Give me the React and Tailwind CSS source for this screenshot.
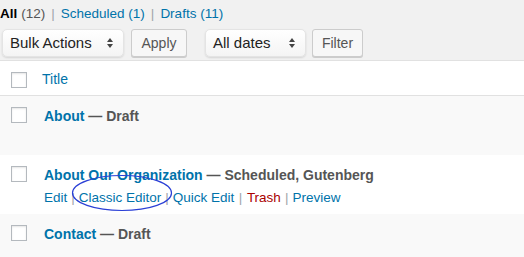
import React from 'react';

const font = { fontFamily: '"Liberation Sans", Arial, sans-serif' };

const Sep = ({ gap = 'mx-[6px]' }) => <span className={`${gap} text-[#a0a5aa]`}>|</span>;

const Arrows = () => (
  <svg width="8" height="12" viewBox="0 0 8 12" className="shrink-0">
    <path d="M4 1 L7 5 L1 5 Z" fill="#444" />
    <path d="M4 11 L7 7 L1 7 Z" fill="#444" />
  </svg>
);

const Select = ({ label, width }) => (
  <div
    className={`flex h-[28px] items-center justify-between rounded-[5px] border border-[#e4e4e4] bg-gradient-to-b from-white to-[#f4f4f4] pl-[7px] pr-[9px] text-[15px] text-[#222] shadow-[0_1px_2px_rgba(0,0,0,0.12)] ${width}`}
  >
    <span>{label}</span>
    <Arrows />
  </div>
);

const Button = ({ label, width }) => (
  <div
    className={`flex h-[28px] items-center justify-center rounded-[3px] border border-[#cccccc] bg-[#f7f7f7] text-[14px] text-[#555] shadow-[0_1px_0_#cccccc] ${width}`}
  >
    {label}
  </div>
);

const Checkbox = () => (
  <div className="h-[16px] w-[16px] shrink-0 border border-[#b4b9be] bg-white shadow-[inset_0_1px_2px_rgba(0,0,0,0.1)]" />
);

const Row = ({ title, state, bg, actions }) => (
  <div className={`relative flex h-[59px] ${bg}`}>
    <div className="pl-[11px] pt-[11px]">
      <Checkbox />
    </div>
    <div className="pl-[17px] pt-[11px]">
      <div className="text-[14px] font-bold leading-[18px]">
        <span className="text-[#0073aa]">{title}</span>
        <span className="text-[#555]"> — {state}</span>
      </div>
      {actions && (
        <div className="relative mt-[5px] flex text-[13.5px] leading-[18px]">
          <span className="text-[#0073aa]">Edit</span>
          <Sep gap="mx-[4px]" />
          <span className="text-[#0073aa]">Classic Editor</span>
          <Sep gap="mx-[4px]" />
          <span className="text-[#0073aa]">Quick Edit</span>
          <Sep gap="mx-[4.5px]" />
          <span className="text-[#a00]">Trash</span>
          <Sep gap="mx-[4px]" />
          <span className="text-[#0073aa]">Preview</span>
          <svg
            className="absolute left-[27px] top-[-15px]"
            width="102"
            height="38"
            viewBox="0 0 102 38"
          >
            <ellipse cx="51" cy="19" rx="49.5" ry="17.5" fill="none" stroke="#2a3fd6" strokeWidth="1.2" />
          </svg>
        </div>
      )}
    </div>
  </div>
);

export default function App() {
  return (
    <div className="h-[257px] w-[524px] overflow-hidden bg-[#f1f1f1]" style={font}>
      <div className="flex h-[28px] items-center pt-[1px] text-[13.5px]">
        <span className="font-bold text-black">All</span>
        <span className="ml-[4px] text-[#555]">(12)</span>
        <Sep />
        <span className="text-[#0073aa]">Scheduled (1)</span>
        <Sep />
        <span className="text-[#0073aa]">Drafts (11)</span>
      </div>
      <div className="mt-[1px] flex items-center pl-[2px]">
        <Select label="Bulk Actions" width="w-[122px]" />
        <div className="ml-[7px]">
          <Button label="Apply" width="w-[56px]" />
        </div>
        <div className="ml-[18px]">
          <Select label="All dates" width="w-[101px]" />
        </div>
        <div className="ml-[6px]">
          <Button label="Filter" width="w-[51px]" />
        </div>
      </div>
      <div className="mt-[3px] border-t border-[#e1e1e1]">
        <div className="flex h-[35px] border-b border-[#e1e1e1] bg-white">
          <div className="pl-[11px] pt-[11px]">
            <Checkbox />
          </div>
          <div className="flex items-center pl-[15px] pt-[2px] text-[14px] text-[#0073aa]">Title</div>
        </div>
        <Row title="About" state="Draft" bg="bg-[#f9f9f9]" />
        <Row title="About Our Organization" state="Scheduled, Gutenberg" bg="bg-white" actions />
        <Row title="Contact" state="Draft" bg="bg-[#f9f9f9]" />
      </div>
    </div>
  );
}
